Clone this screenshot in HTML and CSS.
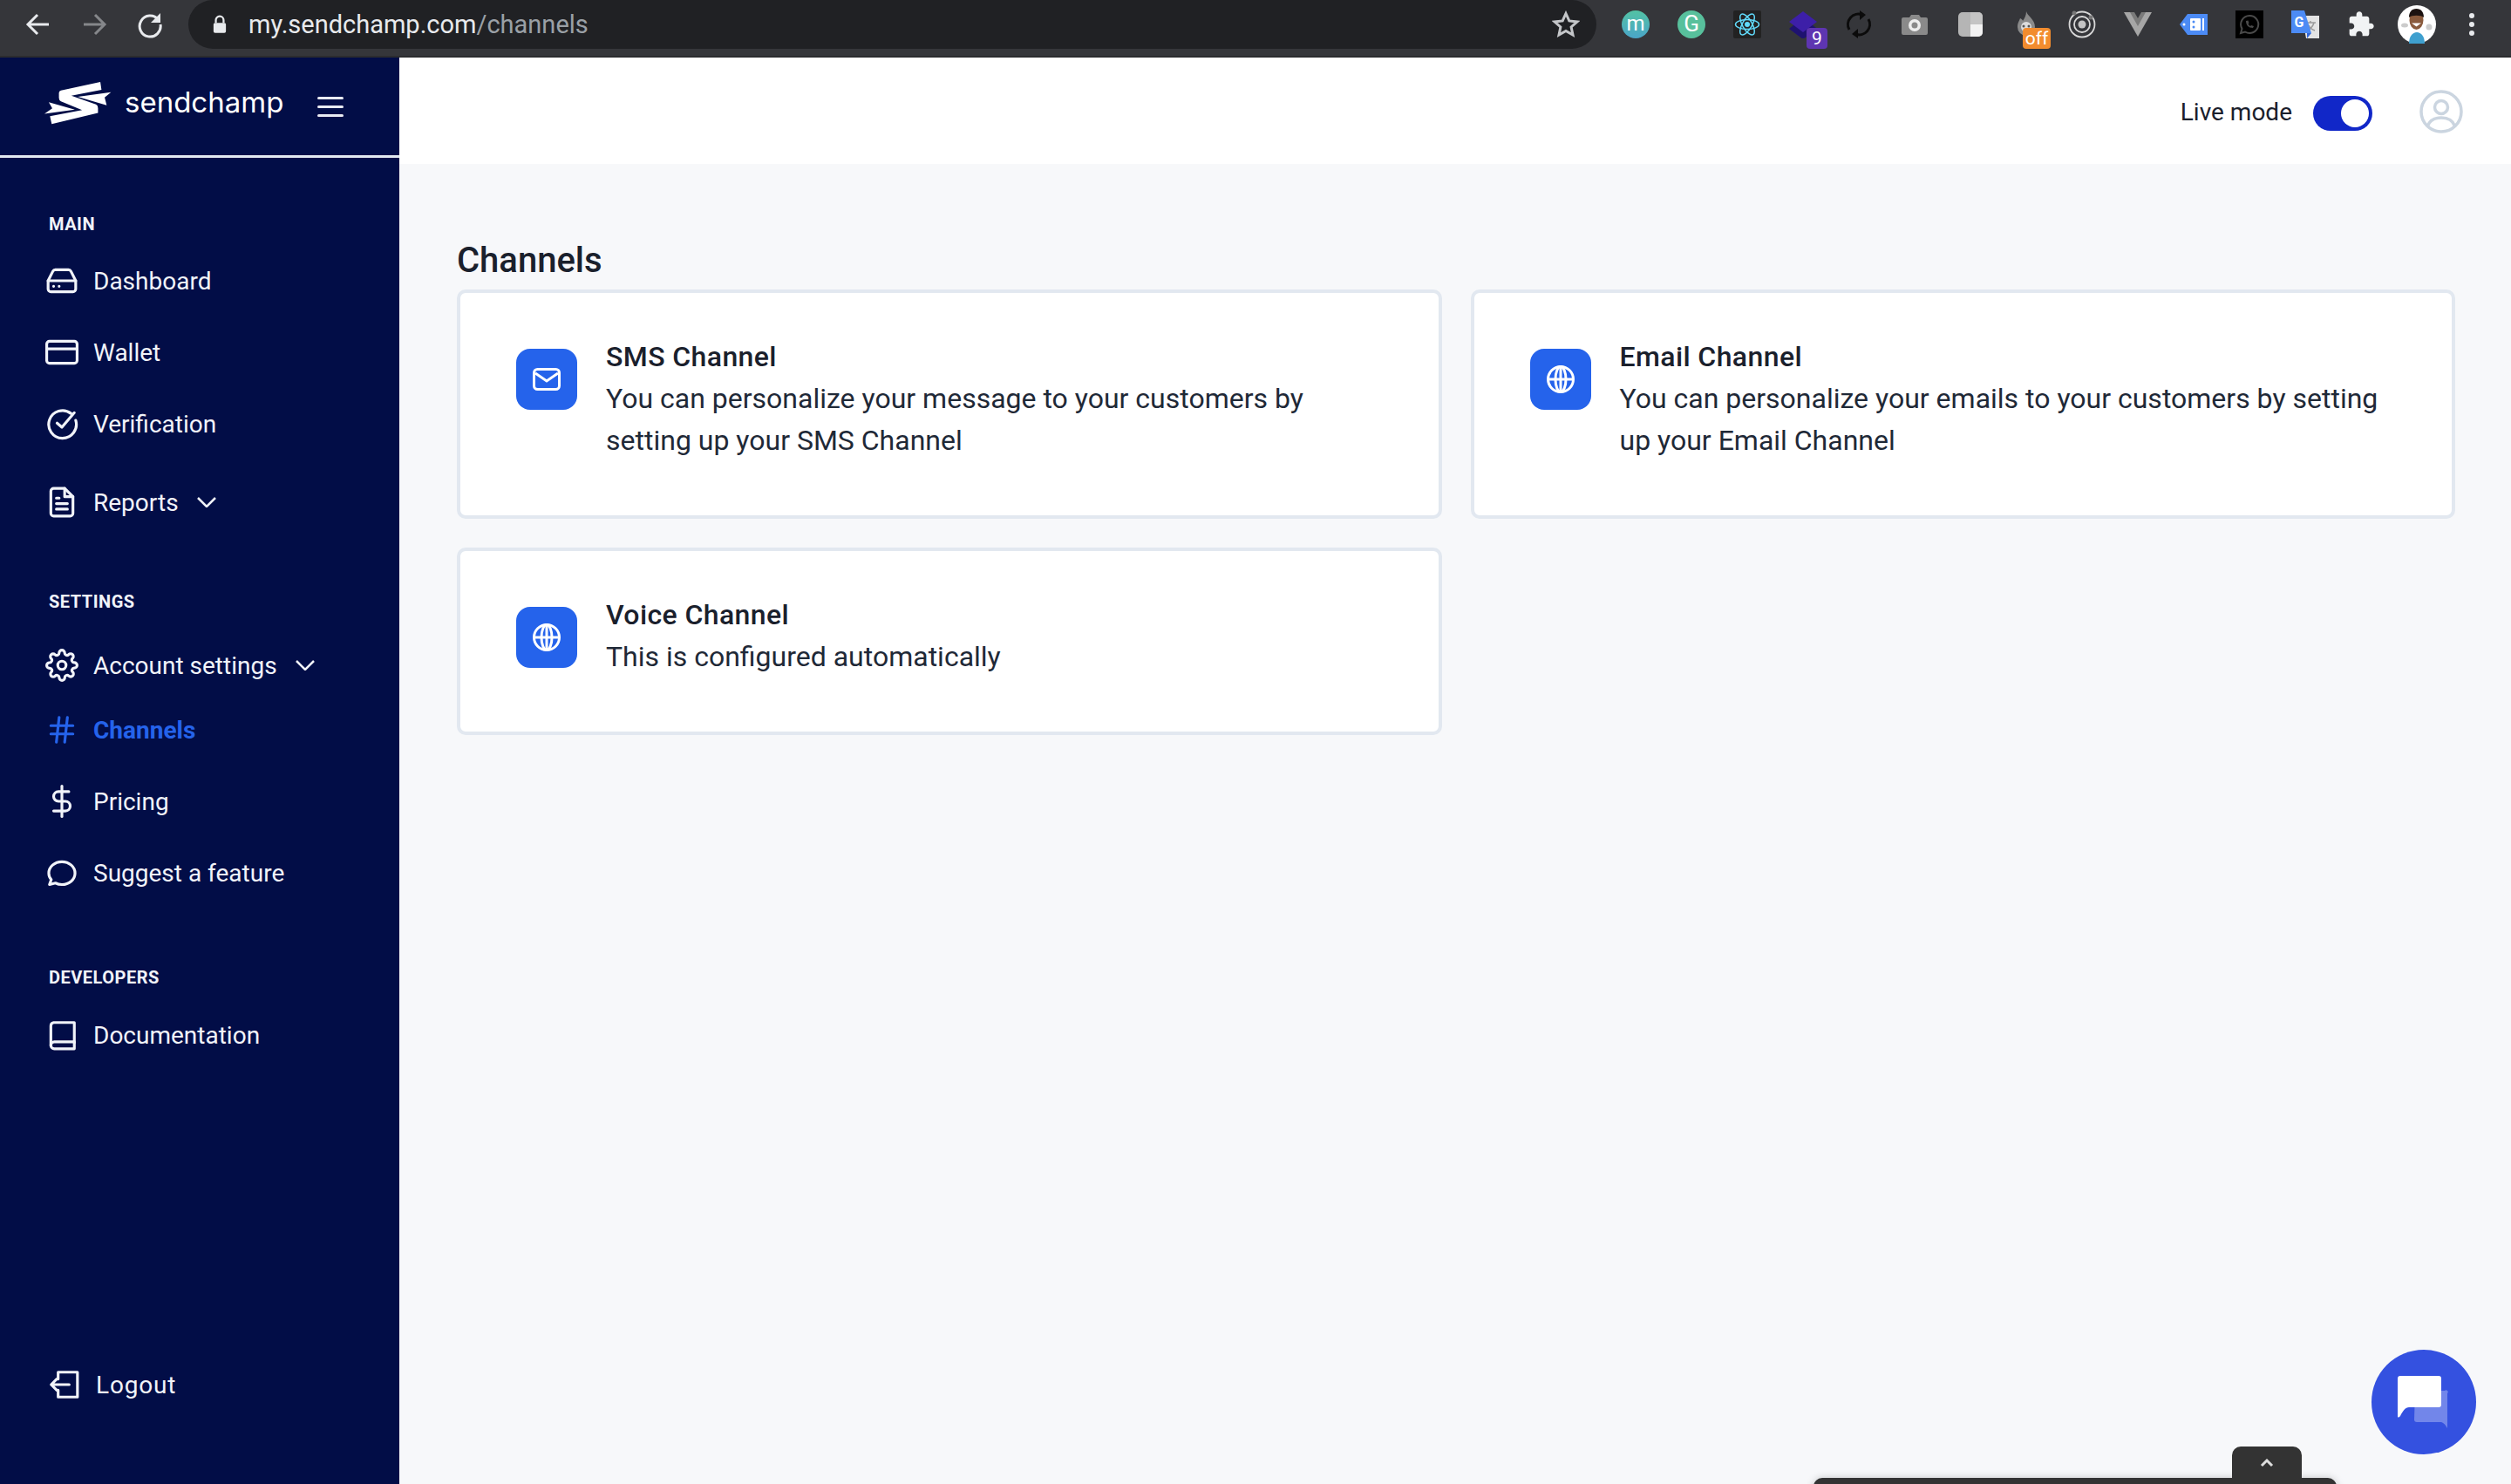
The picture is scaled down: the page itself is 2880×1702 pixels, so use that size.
FILE: index.html
```html
<!DOCTYPE html>
<html lang="en">

<head>
    <meta charset="UTF-8" />
    <title>Sendchamp - Channels</title>
    <link rel="stylesheet" href="styles.css">
</head>

<body>
    <div class="browser-bar">
        <svg class="nav-btn" viewBox="0 0 32 32"><path d="M28 16H5M15 5L4 16l11 11" /></svg>
        <svg class="nav-btn off" viewBox="0 0 32 32"><path d="M4 16h23M17 5l11 11-11 11" /></svg>
        <svg class="nav-btn" viewBox="0 0 32 32"><path d="M25.5 10.5A12 12 0 1 0 28 16" /><path class="fill" d="M28 3v11H17z" /></svg>
        <div class="url-pill">
            <svg class="lock" viewBox="0 0 18 24"><path d="M4 10V6.5a5 5 0 0 1 10 0V10" class="lock-arc" /><rect x="1" y="10" width="16" height="13" rx="2" /></svg>
            <span class="url-host">my.sendchamp.com</span><span class="url-path">/channels</span>
            <svg class="star" viewBox="0 0 32 32"><path d="M16 3.5l3.800 8.400 9.200 1-6.900 6.100 1.900 9L16 23.400 8 28l1.900-9L3 12.900l9.200-1z" /></svg>
        </div>
        <div class="ext-row">
            <span class="ext ext-round ext-m">m</span>
            <span class="ext ext-round ext-g">G</span>
            <svg class="ext" viewBox="0 0 32 32"><rect width="32" height="32" rx="2" fill="#222" /><g fill="none" stroke="#61dafb" stroke-width="1.500"><ellipse cx="16" cy="16" rx="13.500" ry="5.500" /><ellipse cx="16" cy="16" rx="13.500" ry="5.500" transform="rotate(60 16 16)" /><ellipse cx="16" cy="16" rx="13.500" ry="5.500" transform="rotate(120 16 16)" /></g><circle cx="16" cy="16" r="3" fill="#61dafb" /></svg>
            <span class="ext ext-badged">
                <svg viewBox="0 0 32 32"><path d="M16 8l16 13-16 12L0 21z" fill="#1e1270" /><path d="M16 1l16 12-16 12L0 13z" fill="#3d1fa8" /></svg>
                <span class="badge badge-purple">9</span>
            </span>
            <svg class="ext" viewBox="0 0 32 32" fill="none" stroke="#0b0b0b" stroke-width="3"><path d="M5 22A12 12 0 0 1 20 5" /><path d="M27 10A12 12 0 0 1 12 27" /><path fill="#0b0b0b" stroke="none" d="M17 0l7 5-7 6zM15 21l-7 6 7 5z" /></svg>
            <svg class="ext" viewBox="0 0 32 32"><path d="M3 8h7l2-3h9l2 3h6a2 2 0 0 1 2 2v16a2 2 0 0 1-2 2H3a2 2 0 0 1-2-2V10a2 2 0 0 1 2-2z" fill="#8a8a8a" /><circle cx="16" cy="17" r="7" fill="#eee" /><circle cx="16" cy="17" r="3.500" fill="#8a8a8a" /></svg>
            <svg class="ext" viewBox="0 0 32 32"><rect x="2" y="2" width="28" height="28" rx="5" fill="#b5b5b5" /><path d="M16 2h9a5 5 0 0 1 5 5v9H16z" fill="#c4c4c4" /><path d="M16 16h14v9a5 5 0 0 1-5 5h-9z" fill="#f2f2f2" /></svg>
            <span class="ext ext-badged">
                <svg viewBox="0 0 32 32"><path d="M16 1c1 5 10 9 10 18a10 10 0 0 1-20 0c0-5 2-7 3-10 2 1 3 2 3 3 2-3 4-6 4-11z" fill="#8a8a8a" /><circle cx="16" cy="19" r="6" fill="#ddd" /><circle cx="13" cy="18" r="1.500" fill="#555" /><circle cx="19" cy="18" r="1.500" fill="#555" /></svg>
                <span class="badge badge-orange">off</span>
            </span>
            <svg class="ext" viewBox="0 0 32 32"><g fill="none" stroke="#d8d8d8" stroke-width="1.800"><circle cx="16" cy="16" r="14.500" /><circle cx="16" cy="16" r="9" /></g><circle cx="16" cy="16" r="4.500" fill="#c4c4c4" /><circle cx="7" cy="3" r="2.500" fill="#777" /><circle cx="26" cy="8" r="2.500" fill="#777" /></svg>
            <svg class="ext" viewBox="0 0 32 32"><path d="M0 2h32L16 30z" fill="#a6a6a6" /><path d="M7 2h18L16 18z" fill="#7a7a7a" /><path d="M12 2h8l-4 7z" fill="#35363a" /></svg>
            <svg class="ext" viewBox="0 0 32 32"><path d="M9 4h23v24H9L0 16z" fill="#4c8bf5" /><rect x="12" y="9" width="12" height="14" rx="1" fill="#fff" /><circle cx="5" cy="16" r="1.500" fill="#fff" /><circle cx="16" cy="13" r="1.500" fill="#4c8bf5" /><circle cx="16" cy="19" r="1.500" fill="#4c8bf5" /><path d="M26 9h2v14h-2z" fill="#fff" /></svg>
            <svg class="ext" viewBox="0 0 32 32"><rect width="32" height="32" fill="#000" /><path d="M16 6a10 10 0 0 0-8.500 15L6 26l5-1.500A10 10 0 1 0 16 6z" fill="none" stroke="#4a4a4a" stroke-width="2" /><path d="M12 12c0 5 3 8 8 8l1-2-3-1-1 1c-1-.5-2-2-2.500-2.500l1-1-1-3z" fill="#4a4a4a" /></svg>
            <span class="ext ext-translate">
                <svg viewBox="0 0 32 32"><path d="M12 6h20v26H17z" fill="#e4e4e4" /><path d="M17 14h11M22 12v2M26 14c-1 4-4 7-7 9M20 17c1 3 4 5 7 6" fill="none" stroke="#9a9a9a" stroke-width="1.500" /><path d="M0 0h15l8 26H0z" fill="#4c8bf5" /><path d="M18 26h5l-5 6z" fill="#3367d6" /></svg>
                <span class="ext-translate-g">G</span>
            </span>
            <svg class="ext" viewBox="0 0 24 24"><path fill="#f1f3f4" d="M20.500 11H19V7c0-1.100-.9-2-2-2h-4V3.500C13 2.120 11.880 1 10.500 1S8 2.120 8 3.500V5H4c-1.100 0-1.990.9-1.990 2v3.800H3.500c1.490 0 2.700 1.210 2.700 2.700s-1.210 2.700-2.700 2.700H2V20c0 1.100.9 2 2 2h3.800v-1.500c0-1.490 1.210-2.700 2.700-2.700 1.490 0 2.700 1.210 2.700 2.700V22H17c1.100 0 2-.9 2-2v-4h1.500c1.380 0 2.500-1.120 2.500-2.500S21.880 11 20.500 11z" /></svg>
            <svg class="ext ext-avatar" viewBox="0 0 44 44"><circle cx="22" cy="22" r="22" fill="#fff" /><ellipse cx="8" cy="23" rx="4" ry="2.500" fill="#ccc" /><ellipse cx="36" cy="25" rx="3.500" ry="3.500" fill="#ccc" /><path d="M13 44c0-8 4-13 9-13s9 5 9 13z" fill="#3fa0cf" /><ellipse cx="21.500" cy="17" rx="8" ry="11" fill="#8a5a3c" /><path d="M13 14c0-6 3-10 8.500-10S30 8 30 14c-3-3-14-3-17 0z" fill="#1c1210" /><path d="M16 20.500h11l-5.500 4z" fill="#fff" /></svg>
            <svg class="ext-dots" viewBox="0 0 8 32"><circle cx="4" cy="6" r="3" /><circle cx="4" cy="16" r="3" /><circle cx="4" cy="26" r="3" /></svg>
        </div>
    </div>

    <div class="app">
        <aside class="sidebar">
            <div class="brand">
                <svg class="brand-logo" viewBox="35 15 235 150">
                    <path d="M92 44L228 15l4 27-104 20 85 30q7 3 7 13v17L60 160l-6-27 111-21-73-30q-7-4-7-12V52q0-6 7-8z" fill="#fff" />
                    <path d="M150 66l115-16-22 18 7 27zM50 85l90 25-105 15 27-19z" fill="#fff" />
                </svg>
                <span class="brand-name">sendchamp</span>
                <div class="hamburger"><span></span><span></span><span></span></div>
            </div>
            <nav class="menu">
                <h4 class="menu-title first">MAIN</h4>
                <a class="menu-item">
                    <svg class="icon" viewBox="0 0 24 24"><path d="M22 12H2" /><path d="M5.450 5.110L2 12v6a2 2 0 0 0 2 2h16a2 2 0 0 0 2-2v-6l-3.450-6.890A2 2 0 0 0 16.760 4H7.240a2 2 0 0 0-1.790 1.110z" /><path d="M6 16h.01M10 16h.01" /></svg>
                    <span>Dashboard</span>
                </a>
                <a class="menu-item">
                    <svg class="icon" viewBox="0 0 24 24"><rect x="1" y="4" width="22" height="16" rx="2" /><path d="M1 9.500h22" /></svg>
                    <span>Wallet</span>
                </a>
                <a class="menu-item">
                    <svg class="icon" viewBox="0 0 24 24"><path d="M22 9.500A10 10 0 1 1 18.500 4.500" /><path d="M8.500 11.500l3.500 3L21 4" /></svg>
                    <span>Verification</span>
                </a>
                <a class="menu-item menu-item-tall">
                    <svg class="icon" viewBox="0 0 24 24"><path d="M14 2H6a2 2 0 0 0-2 2v16a2 2 0 0 0 2 2h12a2 2 0 0 0 2-2V8z" /><path d="M14 2v6h6" /><path d="M16 17H8M16 13H8M10 9H8" /></svg>
                    <span>Reports</span>
                    <svg class="chevron" viewBox="0 0 22 12"><path d="M1 1l10 10L21 1" /></svg>
                </a>
                <h4 class="menu-title settings">SETTINGS</h4>
                <a class="menu-item menu-item-short">
                    <svg class="icon" viewBox="0 0 24 24"><circle cx="12" cy="12" r="3" /><path d="M19.400 15a1.650 1.650 0 0 0 .33 1.820l.06.06a2 2 0 0 1 0 2.830 2 2 0 0 1-2.830 0l-.06-.06a1.650 1.650 0 0 0-1.820-.33 1.650 1.650 0 0 0-1 1.510V21a2 2 0 0 1-2 2 2 2 0 0 1-2-2v-.09A1.650 1.650 0 0 0 9 19.400a1.650 1.650 0 0 0-1.820.33l-.06.06a2 2 0 0 1-2.830 0 2 2 0 0 1 0-2.830l.06-.06a1.650 1.650 0 0 0 .33-1.820 1.650 1.650 0 0 0-1.510-1H3a2 2 0 0 1-2-2 2 2 0 0 1 2-2h.09A1.650 1.650 0 0 0 4.600 9a1.650 1.650 0 0 0-.33-1.820l-.06-.06a2 2 0 0 1 0-2.830 2 2 0 0 1 2.830 0l.06.06a1.650 1.650 0 0 0 1.820.33H9a1.650 1.650 0 0 0 1-1.510V3a2 2 0 0 1 2-2 2 2 0 0 1 2 2v.09a1.650 1.650 0 0 0 1 1.510 1.650 1.650 0 0 0 1.820-.33l.06-.06a2 2 0 0 1 2.830 0 2 2 0 0 1 0 2.830l-.06.06a1.650 1.650 0 0 0-.33 1.820V9a1.650 1.650 0 0 0 1.510 1H21a2 2 0 0 1 2 2 2 2 0 0 1-2 2h-.09a1.650 1.650 0 0 0-1.510 1z" /></svg>
                    <span>Account settings</span>
                    <svg class="chevron" viewBox="0 0 22 12"><path d="M1 1l10 10L21 1" /></svg>
                </a>
                <a class="menu-item menu-item-short active">
                    <svg class="icon" viewBox="0 0 24 24"><path d="M4 9h16M4 15h16M10 3L8 21M16 3l-2 18" /></svg>
                    <span>Channels</span>
                </a>
                <a class="menu-item">
                    <svg class="icon" viewBox="0 0 24 24"><path d="M12 1v22" /><path d="M17 5H9.500a3.500 3.500 0 0 0 0 7h5a3.500 3.500 0 0 1 0 7H6" /></svg>
                    <span>Pricing</span>
                </a>
                <a class="menu-item">
                    <svg class="icon" viewBox="0 0 24 24"><path d="M3 20.500l1.300-3.600C3 15.500 2.500 14 2.500 12.300 2.500 7.700 6.700 4 12 4s9.500 3.700 9.500 8.300-4.200 8.200-9.500 8.200c-1.700 0-3.300-.4-4.700-1.100z" /></svg>
                    <span>Suggest a feature</span>
                </a>
                <h4 class="menu-title">DEVELOPERS</h4>
                <a class="menu-item">
                    <svg class="icon" viewBox="0 0 24 24"><path d="M21 17.500V3H6a2.500 2.500 0 0 0-2 2.500v14" /><path d="M4 19.500A2.500 2.500 0 0 1 6.500 17H21v5H6.500A2.500 2.500 0 0 1 4 19.500z" /></svg>
                    <span>Documentation</span>
                </a>
            </nav>
            <a class="menu-item logout">
                <svg class="icon" viewBox="0 0 24 24"><path d="M8 8V3h14v18H8v-5" /><path d="M16 12H3M7 8l-4 4 4 4" /></svg>
                <span>Logout</span>
            </a>
        </aside>

        <div class="page">
            <header class="topbar">
                <span class="live-label">Live mode</span>
                <div class="toggle"><span class="toggle-knob"></span></div>
                <svg class="user-icon" viewBox="0 0 50 50"><circle cx="25" cy="25" r="23" /><circle cx="25" cy="20" r="7.500" /><path d="M9.500 41.500C12 34.500 18 32 25 32s13 2.500 15.500 9.500" /></svg>
            </header>
            <main class="content">
                <h1>Channels</h1>
                <div class="channel-grid">
                    <div class="channel-card">
                        <div class="channel-icon">
                            <svg viewBox="0 0 32 26"><rect x="1.500" y="1.500" width="29" height="23" rx="4" /><path d="M3 6l13 9 13-9" /></svg>
                        </div>
                        <div class="channel-text">
                            <h2>SMS Channel</h2>
                            <p>You can personalize your message to your customers by setting up your SMS Channel</p>
                        </div>
                    </div>
                    <div class="channel-card">
                        <div class="channel-icon">
                            <svg viewBox="0 0 32 32"><circle cx="16" cy="16" r="14.500" /><ellipse cx="16" cy="16" rx="6" ry="14.500" /><path d="M1.500 16h29M16 1.500v29" /></svg>
                        </div>
                        <div class="channel-text">
                            <h2>Email Channel</h2>
                            <p>You can personalize your emails to your customers by setting up your Email Channel</p>
                        </div>
                    </div>
                    <div class="channel-card">
                        <div class="channel-icon">
                            <svg viewBox="0 0 32 32"><circle cx="16" cy="16" r="14.500" /><ellipse cx="16" cy="16" rx="6" ry="14.500" /><path d="M1.500 16h29M16 1.500v29" /></svg>
                        </div>
                        <div class="channel-text">
                            <h2>Voice Channel</h2>
                            <p>This is configured automatically</p>
                        </div>
                    </div>
                </div>
            </main>
        </div>
    </div>

    <div class="chat-bubble">
        <svg viewBox="0 0 60 60">
            <path d="M20 17h34a2 2 0 0 1 3 3v40c-3-5-5-7-8-7H22a3 3 0 0 1-3-3z" fill="#7286ea" />
            <path d="M3 0h44a3 3 0 0 1 3 3v30a3 3 0 0 1-3 3H13c-4 0-7 4-10 10-2 2-3 2-3 0V3a3 3 0 0 1 3-3z" fill="#fff" />
        </svg>
    </div>

    <div class="dock">
        <div class="dock-tab">
            <svg viewBox="0 0 16 10"><path d="M2 8l6-6 6 6" /></svg>
        </div>
    </div>
</body>

</html>
```
FILE: styles.css
```css
* {
    box-sizing: border-box;
}

body {
    margin: 0;
    height: 100vh;
    overflow: hidden;
    display: flex;
    flex-direction: column;
    font-family: Roboto, sans-serif;
    background: #f7f8fa;
    position: relative;
}

/* browser chrome */
.browser-bar {
    height: 66px;
    flex-shrink: 0;
    background: #35363a;
    border-bottom: 2px solid #2b2c2f;
    display: flex;
    align-items: flex-start;
    padding-left: 28px;
}

.nav-btn {
    width: 32px;
    height: 32px;
    margin: 12px 32px 0 0;
    fill: none;
    stroke: #e8eaed;
    stroke-width: 3;
}

.nav-btn.off {
    stroke: #85878a;
}

.nav-btn .fill {
    fill: #e8eaed;
    stroke: none;
}

.url-pill {
    width: 1615px;
    height: 56px;
    margin-left: -4px;
    background: #202124;
    border-radius: 28px;
    display: flex;
    align-items: center;
    padding-left: 28px;
    font-size: 29px;
}

.lock {
    width: 16px;
    height: 22px;
    margin-right: 25px;
    fill: #e8eaed;
}

.lock-arc {
    fill: none;
    stroke: #e8eaed;
    stroke-width: 2.5;
}

.url-host {
    color: #e8eaed;
}

.url-path {
    color: #9aa0a6;
}

.star {
    width: 32px;
    height: 32px;
    margin-left: auto;
    margin-right: 19px;
    fill: none;
    stroke: #c4c6c9;
    stroke-width: 3;
}

.ext-row {
    display: flex;
    gap: 32px;
    margin-left: 29px;
    padding-top: 12px;
}

.ext {
    width: 32px;
    height: 32px;
    display: block;
    flex-shrink: 0;
}

.ext-round {
    border-radius: 50%;
    color: #fff;
    font-size: 24px;
    line-height: 30px;
    text-align: center;
}

.ext-m {
    background: linear-gradient(#53c2a4, #4aa5c8);
}

.ext-g {
    background: #58c09c;
    font-size: 26px;
}

.ext-badged {
    position: relative;
}

.ext-badged svg,
.ext-translate svg {
    width: 32px;
    height: 32px;
    display: block;
}

.badge {
    position: absolute;
    top: 20px;
    left: 20px;
    height: 24px;
    border-radius: 4px;
    color: #fff;
    font-size: 21px;
    line-height: 24px;
    text-align: center;
}

.badge-purple {
    width: 24px;
    background: #5e35b1;
}

.badge-orange {
    left: 12px;
    width: 32px;
    background: #f28c2e;
}

.ext-translate {
    position: relative;
}

.ext-translate-g {
    position: absolute;
    left: 1px;
    top: 4px;
    width: 16px;
    color: #fff;
    font-size: 16px;
    font-weight: 700;
    text-align: center;
}

.ext-avatar {
    width: 44px;
    height: 44px;
    margin: -6px -6px 0;
}

.ext-dots {
    width: 8px;
    height: 32px;
    margin-left: 11px;
    fill: #e8eaed;
}

/* app layout */
.app {
    flex: 1;
    display: flex;
    min-height: 0;
}

.sidebar {
    width: 458px;
    flex-shrink: 0;
    background: #020d47;
    color: #f1f3f9;
    display: flex;
    flex-direction: column;
}

.brand {
    height: 115px;
    flex-shrink: 0;
    border-bottom: 3px solid #e2e8f0;
    display: flex;
    align-items: flex-start;
    padding: 28px 0 0 51px;
}

.brand-logo {
    width: 78px;
    height: 50px;
}

.brand-name {
    margin-left: 14px;
    font-family: Inter, sans-serif;
    font-size: 33px;
    line-height: 46px;
    color: #fff;
}

.hamburger {
    margin: 17px 0 0 39px;
    width: 30px;
    display: flex;
    flex-direction: column;
    gap: 7px;
}

.hamburger span {
    height: 3px;
    border-radius: 2px;
    background: #e8eaf2;
}

.menu {
    display: flex;
    flex-direction: column;
}

.menu-title {
    margin: 64px 0 10px;
    padding-left: 56px;
    height: 30px;
    line-height: 30px;
    font-size: 20px;
    font-weight: 700;
    letter-spacing: 0.5px;
}

.menu-title.first {
    margin: 61px 0 9px;
}

.menu-title.settings {
    margin: 50px 0 21px;
}

.menu-item {
    height: 82px;
    display: flex;
    align-items: center;
    padding-left: 52px;
    font-size: 28px;
    color: #f1f3f9;
}

.menu-item-tall {
    height: 98px;
}

.menu-item-short {
    height: 74px;
}

.menu-item span {
    margin-left: 17px;
}

.icon {
    width: 38px;
    height: 38px;
    flex-shrink: 0;
    fill: none;
    stroke: currentColor;
    stroke-width: 2;
    stroke-linecap: round;
    stroke-linejoin: round;
}

.chevron {
    width: 22px;
    height: 12px;
    margin-left: 21px;
    fill: none;
    stroke: currentColor;
    stroke-width: 2.5;
}

.menu-item.active {
    color: #2563eb;
    font-weight: 700;
    margin-bottom: 4px;
}

.logout {
    margin-top: auto;
    margin-bottom: 73px;
    padding-left: 54px;
    letter-spacing: 0.8px;
}

.logout span {
    margin-left: 18px;
}

/* page */
.page {
    flex: 1;
    min-width: 0;
    display: flex;
    flex-direction: column;
}

.topbar {
    height: 122px;
    flex-shrink: 0;
    background: #fff;
    display: flex;
    align-items: center;
    justify-content: flex-end;
    padding: 6px 55px 0 0;
}

.live-label {
    font-size: 28px;
    padding-bottom: 3px;
    color: #1a202c;
}

.toggle {
    width: 68px;
    height: 40px;
    margin-left: 24px;
    border-radius: 20px;
    background: #1127c8;
    display: flex;
    align-items: center;
    justify-content: flex-end;
    padding-right: 4px;
}

.toggle-knob {
    width: 32px;
    height: 32px;
    border-radius: 50%;
    background: #fff;
}

.user-icon {
    width: 50px;
    height: 50px;
    margin: -4px 0 0 54px;
    fill: none;
    stroke: #cbd5e0;
    stroke-width: 3.5;
}

.content {
    padding: 88px 64px 0 66px;
}

h1 {
    margin: 0;
    font-size: 40px;
    line-height: 46px;
    height: 56px;
    font-weight: 500;
    color: #1a202c;
}

.channel-grid {
    display: grid;
    grid-template-columns: 1fr 1fr;
    gap: 33px;
    align-items: start;
}

.channel-card {
    background: #fff;
    border: 4px solid #e2e8f0;
    border-radius: 10px;
    padding: 49px 64px 62px;
    display: flex;
    gap: 33px;
}

.channel-icon {
    width: 70px;
    height: 70px;
    flex-shrink: 0;
    margin-top: 15px;
    border-radius: 16px;
    background: #2563eb;
    display: flex;
    align-items: center;
    justify-content: center;
}

.channel-icon svg {
    width: 32px;
    fill: none;
    stroke: #fff;
    stroke-width: 3;
}

h2 {
    margin: 0;
    font-size: 32px;
    line-height: 48px;
    font-weight: 500;
    letter-spacing: 0.4px;
    color: #1a202c;
}

p {
    margin: 0;
    font-size: 32px;
    line-height: 48px;
    color: #1f2937;
}

/* floating widgets */
.chat-bubble {
    position: absolute;
    left: 2720px;
    top: 1548px;
    width: 120px;
    height: 120px;
    border-radius: 50%;
    background: #3451e0;
    display: flex;
    align-items: center;
    justify-content: center;
}

.chat-bubble svg {
    width: 60px;
    height: 60px;
}

.dock {
    position: absolute;
    left: 2080px;
    top: 1695px;
    width: 600px;
    height: 20px;
    background: #333;
    border-radius: 10px 10px 0 0;
    box-shadow: 0 0 10px rgba(0, 0, 0, 0.2);
}

.dock-tab {
    position: absolute;
    left: 480px;
    top: -36px;
    width: 80px;
    height: 37px;
    background: #333;
    border-radius: 10px 10px 0 0;
    display: flex;
    align-items: center;
    justify-content: center;
}

.dock-tab svg {
    width: 16px;
    height: 10px;
    fill: none;
    stroke: #ddd;
    stroke-width: 3;
}
```
